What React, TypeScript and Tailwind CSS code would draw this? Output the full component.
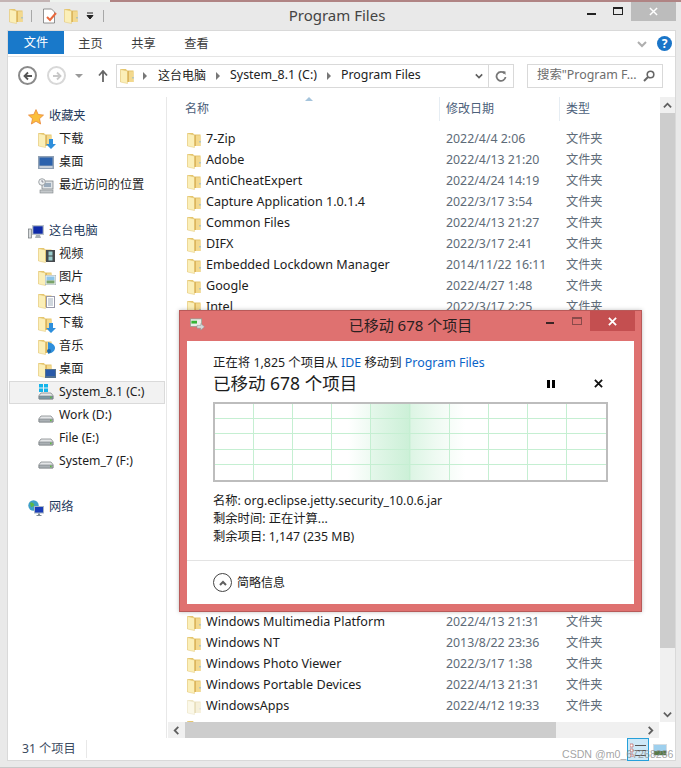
const sans = "font-['Noto_Sans','Noto_Sans_CJK_SC',sans-serif]"

function Folder({ className = "w-[14px] h-[16px]", pale = false }: { className?: string, pale?: boolean }) {
    return (
        <svg viewBox="0 0 14 16" className={className}>
            <path d="M0.500 1h5.500l1 1.500h6.500v11.500H0.500z" fill={pale ? "#efe6c4" : "#e6c66e"} />
            <path d="M0.500 1.500l7 1.500v12.500l-7-1.500z" fill={pale ? "#fbf8e8" : "#fbefb8"} stroke={pale ? "#ebe3c4" : "#e2c474"} strokeWidth="0.500" />
            <path d="M7.500 3h1.500v11H7.500z" fill={pale ? "#e8dfbe" : "#dcb65e"} />
            <path d="M9 3.500h4.500v10.500H9z" fill={pale ? "#f6f0da" : "#f3d98e"} />
            <rect x="12.500" y="9" width="1" height="1.500" fill={pale ? "#d5dde0" : "#7ab2dc"} />
        </svg>
    )
}

function FolderBadge({ kind }: { kind: string }) {
    return (
        <div className="relative w-[16px] h-[16px]">
            <Folder />
            {kind === "down" && (
                <svg viewBox="0 0 10 10" className="absolute right-[-2px] bottom-[-1px] w-[10px] h-[10px]"><path d="M3 0h4v5h3L5 10 0 5h3z" fill="#2e8fdc" /></svg>
            )}
            {kind === "video" && (
                <svg viewBox="0 0 9 12" className="absolute right-[-1px] bottom-[1px] w-[9px] h-[12px]"><rect width="9" height="12" fill="#45494d" /><rect x="2.500" y="1.500" width="4" height="4" fill="#9cc" /><rect x="2.500" y="6.500" width="4" height="4" fill="#9cc" /></svg>
            )}
            {kind === "image" && (
                <svg viewBox="0 0 11 10" className="absolute right-[-2px] bottom-[1px] w-[11px] h-[10px]"><rect width="11" height="10" fill="#f4f6f8" stroke="#9aa" /><rect x="1.500" y="1.500" width="8" height="4" fill="#8cc4e8" /><rect x="1.500" y="5.500" width="8" height="3" fill="#7aa36a" /></svg>
            )}
            {kind === "doc" && (
                <svg viewBox="0 0 9 12" className="absolute right-[-1px] bottom-[1px] w-[9px] h-[12px]"><rect x="0.500" y="0.500" width="8" height="11" fill="#fff" stroke="#99a" /><path d="M2 3h5M2 5h5M2 7h5M2 9h5" stroke="#89a" strokeWidth="0.800" /></svg>
            )}
            {kind === "music" && (
                <svg viewBox="0 0 10 12" className="absolute right-[-2px] bottom-[1px] w-[10px] h-[12px]"><path d="M2 0c4 1 7 3 7 6s-3 5-7 6z" fill="#2e8fdc" /><circle cx="3" cy="9" r="2" fill="#1c67a8" /></svg>
            )}
            {kind === "desk" && (
                <svg viewBox="0 0 11 9" className="absolute right-[-2px] bottom-[0px] w-[11px] h-[9px]"><rect width="11" height="9" fill="#54718f" /><rect x="1" y="1" width="9" height="6" fill="#2a5aa8" /></svg>
            )}
        </div>
    )
}

function Drive({ win = false }: { win?: boolean }) {
    return (
        <div className="relative w-[16px] h-[16px]">
            <svg viewBox="0 0 16 16" className="w-[16px] h-[16px]">
                <path d="M1 10.500 3 8h10l2 2.500V14H1z" fill="#e4e6e8" stroke="#84888c" strokeWidth="0.800" />
                <path d="M1 11h14v3H1z" fill={win ? "#7d98a4" : "#aab0b4"} stroke="#777c80" strokeWidth="0.600" />
                <rect x="12" y="11.600" width="1.600" height="1.600" fill="#5dbb3f" />
            </svg>
            {win && (
                <svg viewBox="0 0 9 8" className="absolute left-[1px] top-[-1px] w-[9px] h-[8px]"><path d="M0 0h4v3.500H0zM5 0h4v3.500H5zM0 4.500h4V8H0zM5 4.500h4V8H5z" fill="#14b4ea" /></svg>
            )}
        </div>
    )
}

function SideIcon({ kind }: { kind: string }) {
    if (kind === "star") {
        return <svg viewBox="0 0 16 16" className="w-[16px] h-[16px]"><path d="M8 .6l2.200 4.900 5.300.6-4 3.600 1.100 5.300L8 12.300 3.400 15l1.100-5.300-4-3.600 5.300-.6z" fill="#fbbf3c" stroke="#e8873a" strokeWidth="0.800" /></svg>
    }
    if (kind === "screen") {
        return <svg viewBox="0 0 16 14" className="w-[16px] h-[14px]"><rect width="16" height="13" fill="#8fa0b4" /><rect x="1.500" y="1.500" width="13" height="8" fill="#2c62ad" /><rect x="1.500" y="10" width="13" height="2" fill="#c8d0da" /></svg>
    }
    if (kind === "recent") {
        return (
            <svg viewBox="0 0 16 16" className="w-[16px] h-[16px]">
                <rect x="4" y="3" width="11" height="8" fill="#dfe3e6" stroke="#7f8589" strokeWidth="0.800" />
                <rect x="6" y="5" width="7" height="4" fill="#9ab" />
                <rect x="2" y="12" width="13" height="3" fill="#c4c8cb" stroke="#7f8589" strokeWidth="0.600" />
                <circle cx="4" cy="4" r="3.300" fill="#eef1f3" stroke="#8a9094" strokeWidth="0.800" />
                <path d="M4 2v2h1.600" stroke="#667" strokeWidth="0.700" fill="none" />
            </svg>
        )
    }
    if (kind === "pc") {
        return (
            <svg viewBox="0 0 16 16" className="w-[16px] h-[16px]">
                <rect x="0.500" y="5" width="3" height="9" fill="#d9dcde" stroke="#70767a" strokeWidth="0.700" />
                <rect x="4" y="1" width="12" height="10" fill="#b9c2ca" />
                <rect x="5.300" y="2.300" width="9.400" height="7.400" fill="#0f2aa8" />
                <path d="M8 11h4l1 3H7z" fill="#aab1b7" />
            </svg>
        )
    }
    if (kind === "net") {
        return (
            <svg viewBox="0 0 16 16" className="w-[16px] h-[16px]">
                <circle cx="5.500" cy="5.500" r="5.200" fill="#3fa0c8" />
                <path d="M2 3c2-1 3 0 4 1s-1 3-3 3zM7 7c1.500 0 3 .5 3 2l-3 1z" fill="#5cb848" />
                <rect x="6" y="6" width="10" height="7.500" fill="#a9b6c4" />
                <rect x="7" y="7" width="8" height="5.500" fill="#1a3db8" />
                <path d="M10 13.500h2v1.500h1.500v1h-5v-1H10z" fill="#7d8a96" />
            </svg>
        )
    }
    return null
}

function NavGroup({ head, icon, items }: { head: string, icon: string, items: { label: string, icon: React.ReactNode, active?: boolean }[] }) {
    return (
        <div className="flex flex-col text-[12.2px]">
            <div className="h-[23px] flex items-center pl-[20px] gap-[5px]">
                <SideIcon kind={icon} />
                <span className="text-[#1e395b]">{head}</span>
            </div>
            {items.map((it) => (
                <div key={it.label + it.active} className={`h-[23px] flex items-center gap-[5px] ${it.active ? "mx-[1px] pl-[28px] bg-[#f2f2f2] border border-[#dadada]" : "pl-[30px]"}`}>
                    <div className="w-[16px] flex justify-center">{it.icon}</div>
                    <span className="text-[#1c1c1c] whitespace-nowrap">{it.label}</span>
                </div>
            ))}
        </div>
    )
}

function FileRow({ name, date, pale }: { name: string, date: string, pale?: boolean }) {
    return (
        <div className="h-[21px] flex items-center shrink-0">
            <div className="w-[18px] ml-[20px] flex"><Folder pale={pale} /></div>
            <div className="w-[240px] ml-[1px] text-[12.6px] text-[#1c1c1c] whitespace-nowrap">{name}</div>
            <div className="w-[120px] text-[12.35px] text-[#5e6b78] whitespace-nowrap">{date}</div>
            <div className="text-[12.2px] text-[#5e6b78]">文件夹</div>
        </div>
    )
}

function Chevron({ d, className }: { d: string, className?: string }) {
    return <svg viewBox="0 0 10 10" className={className}><path d={d} fill="none" stroke="#5f5f5f" strokeWidth="2" /></svg>
}

const topRows = [
    ["7-Zip", "2022/4/4 2:06"],
    ["Adobe", "2022/4/13 21:20"],
    ["AntiCheatExpert", "2022/4/24 14:19"],
    ["Capture Application 1.0.1.4", "2022/3/17 3:54"],
    ["Common Files", "2022/4/13 21:27"],
    ["DIFX", "2022/3/17 2:41"],
    ["Embedded Lockdown Manager", "2014/11/22 16:11"],
    ["Google", "2022/4/27 1:48"],
    ["Intel", "2022/3/17 2:25"],
]

const bottomRows = [
    ["Windows Multimedia Platform", "2022/4/13 21:31"],
    ["Windows NT", "2013/8/22 23:36"],
    ["Windows Photo Viewer", "2022/3/17 1:38"],
    ["Windows Portable Devices", "2022/4/13 21:31"],
]

function CopyDialog() {
    return (
        <div className="absolute left-[179px] top-[310px] w-[463px] h-[302px] bg-[#df7170] border border-[#b85a59] flex flex-col shadow-[0_0_4px_rgba(0,0,0,0.25)]">
            <div className="h-[30px] pb-[1px] relative flex items-center justify-center text-[15px] text-[#2a2020] shrink-0">
                <svg viewBox="0 0 16 16" className="absolute left-[9px] top-[6px] w-[16px] h-[15px]">
                    <rect x="1" y="2" width="12" height="8" fill="#e8eee8" stroke="#8a9a8a" strokeWidth="0.700" />
                    <rect x="2" y="4" width="6" height="3" fill="#35b535" />
                    <path d="M8 9h4V7l4 3.500L12 14v-2H8z" fill="#d4d8d8" stroke="#8a8f8f" strokeWidth="0.500" />
                </svg>
                <span>已移动 678 个项目</span>
                <div className="absolute left-[366px] top-[11px] w-[8px] h-[2px] bg-[#3a2424]" />
                <div className="absolute left-[392px] top-[6px] w-[10px] h-[8px] border border-[#8a4a4a] border-t-2" />
                <div className="absolute left-[410px] top-0 w-[45px] h-[20px] bg-[#c44f50] flex items-center justify-center">
                    <svg viewBox="0 0 10 10" className="w-[9px] h-[9px]"><path d="M1 1l8 8M9 1l-8 8" stroke="#fff" strokeWidth="2" /></svg>
                </div>
            </div>
            <div className="mx-[7px] mb-[7px] flex-1 bg-white flex flex-col text-[#1c1c1c]">
                <div className="px-[26px] pt-[13px] flex-1 flex flex-col">
                    <div className="h-[18px] leading-[18px] text-[12.4px] whitespace-nowrap">
                        正在将 1,825 个项目从 <span className="text-[#0a64c8]">IDE</span> 移动到 <span className="text-[#0a64c8]">Program Files</span>
                    </div>
                    <div className="h-[23px] flex items-center justify-between text-[17.5px]">
                        <span>已移动 678 个项目</span>
                        <div className="flex items-center gap-[39px] pr-[5px]">
                            <div className="flex gap-[2px]"><div className="w-[3px] h-[8px] bg-black" /><div className="w-[3px] h-[8px] bg-black" /></div>
                            <svg viewBox="0 0 10 10" className="w-[9px] h-[9px]"><path d="M1 1l8 8M9 1l-8 8" stroke="#111" strokeWidth="2" /></svg>
                        </div>
                    </div>
                    <div className="mt-[7px] h-[80px] w-[395px] border-2 border-[#bdbdbd] bg-white relative overflow-hidden">
                        <div className="absolute inset-y-0 left-[133px] w-[117px] bg-[linear-gradient(90deg,rgba(120,215,150,0)_0%,rgba(120,215,150,0.12)_19%,rgba(120,215,150,0.2)_20%,rgba(120,215,150,0.38)_53%,rgba(120,215,150,0.25)_54%,rgba(120,215,150,0.12)_75%,rgba(120,215,150,0)_100%)]" />
                        <div className="absolute inset-0 grid grid-cols-10 grid-rows-5">
                            {Array.from({ length: 50 }).map((_, i) => (
                                <div key={i} className={`border-[#c5efd2] ${i % 10 === 9 ? "" : "border-r"} ${i >= 40 ? "" : "border-b"}`} />
                            ))}
                        </div>
                    </div>
                    <div className="mt-[10px] flex flex-col text-[12.3px] leading-[18px]">
                        <div>名称: org.eclipse.jetty.security_10.0.6.jar</div>
                        <div>剩余时间: 正在计算...</div>
                        <div>剩余项目: 1,147 (235 MB)</div>
                    </div>
                </div>
                <div className="h-[44px] border-t border-[#e3e3e3] flex items-center pl-[26px] gap-[5px] shrink-0">
                    <div className="w-[19px] h-[19px] rounded-full border border-[#444] flex items-center justify-center">
                        <Chevron d="M2 7l3-3 3 3" className="w-[10px] h-[10px]" />
                    </div>
                    <span className="text-[12px]">简略信息</span>
                </div>
            </div>
        </div>
    )
}

export default function App() {
    return (
        <div className={`${sans} relative w-[681px] h-[768px] bg-[#e9e9e9] border-b border-[#c8c8c8] text-[13px] overflow-hidden`}>
            <div className="h-[2px] flex bg-[#b08484]">
                <div className="w-[50px] bg-[#c4b4b4]" />
                <div className="w-[60px] bg-[#eef2ee]" />
            </div>

            {/* title bar */}
            <div className="h-[28px] pb-[2px] relative flex items-center justify-center">
                <div className="absolute left-[9px] top-[6px] flex items-center">
                    <Folder />
                    <div className="w-[1px] h-[12px] bg-[#a8a8a8] ml-[8px]" />
                    <svg viewBox="0 0 16 16" className="w-[16px] h-[16px] ml-[10px]">
                        <path d="M1.500 1h8l3 3v11h-11z" fill="#fff" stroke="#777" strokeWidth="0.800" />
                        <path d="M5 9l3 3 6-7" fill="none" stroke="#e8683c" strokeWidth="2" />
                    </svg>
                    <div className="ml-[6px]"><Folder /></div>
                    <svg viewBox="0 0 8 8" className="w-[8px] h-[8px] ml-[8px]"><path d="M1 1h6M1 3.500h6L4 7z" stroke="#222" strokeWidth="1" fill="#222" /></svg>
                    <div className="w-[1px] h-[12px] bg-[#a8a8a8] ml-[9px]" />
                </div>
                <span className="text-[#444] text-[15px] mr-[7px]">Program Files</span>
                <div className="absolute left-[587px] top-[11px] w-[9px] h-[2px] bg-[#222]" />
                <div className="absolute left-[613px] top-[5px] w-[10px] h-[8px] border border-[#222] border-t-2" />
                <div className="absolute left-[631px] top-0 w-[45px] h-[19px] bg-[#bcbcbc] flex items-center justify-center">
                    <svg viewBox="0 0 10 10" className="w-[9px] h-[9px]"><path d="M1 1l8 8M9 1l-8 8" stroke="#fff" strokeWidth="1.600" /></svg>
                </div>
            </div>

            {/* window body */}
            <div className="mx-[7px] h-[731px] w-[669px] bg-white border border-[#d9d9d9] flex flex-col">
                {/* ribbon tabs */}
                <div className="h-[26px] shrink-0 flex items-start border-b border-[#e5e5e5] relative text-[12.2px]">
                    <div className="w-[56px] h-[23px] pt-[1px] bg-[#1979ca] text-white flex items-center justify-center">文件</div>
                    <div className="flex">
                        <div className="w-[53px] h-[23px] pt-[3px] flex items-center justify-center text-[#3b3b3b]">主页</div>
                        <div className="w-[53px] h-[23px] pt-[3px] flex items-center justify-center text-[#3b3b3b]">共享</div>
                        <div className="w-[53px] h-[23px] pt-[3px] flex items-center justify-center text-[#3b3b3b]">查看</div>
                    </div>
                    <Chevron d="M1 3l4 4 4-4" className="absolute left-[629px] top-[8px] w-[10px] h-[10px] opacity-50" />
                    <div className="absolute left-[649px] top-[5px] w-[15px] h-[15px] rounded-full bg-[#1a75c8] text-white text-[12px] font-bold flex items-center justify-center">?</div>
                </div>

                {/* address row */}
                <div className="h-[40px] pb-[3px] shrink-0 flex items-center pl-[10px]">
                    <div className="w-[19px] h-[19px] rounded-full border-2 border-[#8a8a8a] flex items-center justify-center">
                        <svg viewBox="0 0 10 10" className="w-[10px] h-[10px]"><path d="M9 5H2M5 1.500 1.500 5 5 8.500" fill="none" stroke="#555" strokeWidth="1.800" /></svg>
                    </div>
                    <div className="w-[19px] h-[19px] ml-[10px] rounded-full border-2 border-[#d8d8d8] flex items-center justify-center">
                        <svg viewBox="0 0 10 10" className="w-[10px] h-[10px]"><path d="M1 5h7M5 1.500 8.500 5 5 8.500" fill="none" stroke="#c8c8c8" strokeWidth="1.800" /></svg>
                    </div>
                    <div className="ml-[9px] w-0 h-0 border-x-[4px] border-x-transparent border-t-[4px] border-t-[#9a9a9a]" />
                    <svg viewBox="0 0 10 12" className="w-[10px] h-[12px] ml-[15px]"><path d="M5 12V2M1 5.500 5 1l4 4.500" fill="none" stroke="#666" strokeWidth="1.800" /></svg>

                    <div className="ml-[8px] w-[398px] h-[24px] border border-[#d9d9d9] flex items-center text-[#222] text-[12.4px]">
                        <div className="ml-[3px] flex"><Folder /></div>
                        <div className="ml-[9px] w-0 h-0 border-y-[4px] border-y-transparent border-l-[4px] border-l-[#777]" />
                        <span className="ml-[11px] text-[12px]">这台电脑</span>
                        <div className="ml-[10px] w-0 h-0 border-y-[4px] border-y-transparent border-l-[4px] border-l-[#777]" />
                        <span className="ml-[10px]">System_8.1 (C:)</span>
                        <div className="ml-[10px] w-0 h-0 border-y-[4px] border-y-transparent border-l-[4px] border-l-[#777]" />
                        <span className="ml-[10px]">Program Files</span>
                        <div className="flex-1" />
                        <Chevron d="M1 3l4 4 4-4" className="w-[8px] h-[8px] mr-[5px]" />
                        <div className="w-[25px] h-full border-l border-[#d9d9d9] flex items-center justify-center">
                            <svg viewBox="0 0 12 12" className="w-[12px] h-[12px]"><path d="M9.500 3.500A4.500 4.500 0 1 0 10.500 7" fill="none" stroke="#777" strokeWidth="1.800" /><path d="M7 1l3.500.5V5z" fill="#777" /></svg>
                        </div>
                    </div>
                    <div className="ml-[13px] w-[136px] h-[24px] border border-[#d9d9d9] flex items-center pl-[9px] text-[#6d6d6d] text-[12.4px]">
                        <span className="whitespace-nowrap">搜索"Program F...</span>
                        <div className="flex-1" />
                        <svg viewBox="0 0 12 12" className="w-[12px] h-[12px] mr-[7px]"><circle cx="7.500" cy="4.500" r="3.300" fill="none" stroke="#666" strokeWidth="1.600" /><path d="M5 7l-4 4" stroke="#666" strokeWidth="2" /></svg>
                    </div>
                </div>

                {/* main */}
                <div className="flex flex-1 min-h-0">
                    <div className="w-[159px] shrink-0 border-r border-[#e8e8e8] flex flex-col pt-[8px]">
                        <NavGroup head="收藏夹" icon="star" items={[
                            { label: "下载", icon: <FolderBadge kind="down" /> },
                            { label: "桌面", icon: <SideIcon kind="screen" /> },
                            { label: "最近访问的位置", icon: <SideIcon kind="recent" /> },
                        ]} />
                        <div className="h-[23px]" />
                        <NavGroup head="这台电脑" icon="pc" items={[
                            { label: "视频", icon: <FolderBadge kind="video" /> },
                            { label: "图片", icon: <FolderBadge kind="image" /> },
                            { label: "文档", icon: <FolderBadge kind="doc" /> },
                            { label: "下载", icon: <FolderBadge kind="down" /> },
                            { label: "音乐", icon: <FolderBadge kind="music" /> },
                            { label: "桌面", icon: <FolderBadge kind="desk" /> },
                            { label: "System_8.1 (C:)", icon: <Drive win />, active: true },
                            { label: "Work (D:)", icon: <Drive /> },
                            { label: "File (E:)", icon: <Drive /> },
                            { label: "System_7 (F:)", icon: <Drive /> },
                        ]} />
                        <div className="h-[23px]" />
                        <NavGroup head="网络" icon="net" items={[]} />
                    </div>

                    <div className="flex-1 min-w-0 flex flex-col">
                        <div className="flex-1 min-h-0 flex">
                            <div className="flex-1 min-w-0 flex flex-col overflow-hidden">
                                <div className="h-[24px] shrink-0 flex items-center text-[#4c607a] text-[12px] relative">
                                    <div className="w-[272px] pl-[18px]">名称</div>
                                    <div className="w-[120px] pl-[6px] h-full flex items-center border-l border-[#e6edf3]">修改日期</div>
                                    <div className="pl-[6px] h-full flex items-center border-l border-[#e6edf3]">类型</div>
                                    <div className="absolute left-[138px] top-0 w-0 h-0 border-x-[4px] border-x-transparent border-b-[4px] border-b-[#a5c4dc]" />
                                </div>
                                <div className="pt-[8px] flex flex-col">
                                    {topRows.map((r) => <FileRow key={r[0]} name={r[0]} date={r[1]} />)}
                                    <div className="h-[294px] shrink-0" />
                                    {bottomRows.map((r) => <FileRow key={r[0]} name={r[0]} date={r[1]} />)}
                                    <FileRow name="WindowsApps" date="2022/4/12 19:33" pale />
                                    <div className="h-[21px] flex items-center shrink-0 pl-[20px]"><Folder /></div>
                                </div>
                            </div>
                            {/* vertical scrollbar */}
                            <div className="w-[15px] shrink-0 bg-[#f0f0f0] flex flex-col">
                                <div className="h-[16px] flex items-center justify-center"><Chevron d="M1 7l4-4 4 4" className="w-[9px] h-[9px]" /></div>
                                <div className="h-[535px] bg-[#cdcdcd]" />
                                <div className="flex-1" />
                                <div className="h-[16px] flex items-center justify-center"><Chevron d="M1 3l4 4 4-4" className="w-[9px] h-[9px]" /></div>
                            </div>
                        </div>
                        {/* horizontal scrollbar */}
                        <div className="h-[16px] shrink-0 flex bg-[#f0f0f0] mr-[16px] ml-[1px] items-stretch relative z-10">
                            <div className="w-[17px] flex items-center justify-center"><Chevron d="M7 1L3 5l4 4" className="w-[9px] h-[9px]" /></div>
                            <div className="w-[371px] bg-[#cdcdcd]" />
                            <div className="flex-1" />
                            <div className="w-[17px] flex items-center justify-center"><Chevron d="M3 1l4 4-4 4" className="w-[9px] h-[9px]" /></div>
                        </div>
                    </div>
                </div>

                {/* status bar */}
                <div className="h-[22px] shrink-0 flex items-center relative text-[#3b4a60] text-[12.2px]">
                    <div className="pl-[14px] pr-[10px] border-r border-[#e8e8e8]">31 个项目</div>
                    <div className="absolute left-[619px] top-0 w-[22px] h-[23px] bg-[#cde8f7] border border-[#26a0da] flex items-center justify-center">
                        <svg viewBox="0 0 16 14" className="w-[16px] h-[14px]"><path d="M0 1h3v3H0zM0 6h3v3H0zM0 11h3v3H0z" fill="#fff" stroke="#b44" strokeWidth="0.600" /><path d="M5 2.500h11M5 7.500h11M5 12.500h11" stroke="#555" strokeWidth="1" /></svg>
                    </div>
                    <svg viewBox="0 0 14 12" className="absolute left-[645px] top-[6px] w-[14px] h-[12px]"><rect width="14" height="12" fill="#d6dde2" /><rect x="1" y="1" width="12" height="6" fill="#9ed0ee" /><rect x="1" y="7" width="12" height="4" fill="#567a48" /></svg>
                </div>
            </div>

            <CopyDialog />

            <div className="absolute left-[562px] top-[747px] font-['Liberation_Sans',sans-serif] text-[10.6px] leading-[14px] text-[#8c8c8c]/80 whitespace-nowrap">CSDN @m0_67268286</div>
        </div>
    )
}
